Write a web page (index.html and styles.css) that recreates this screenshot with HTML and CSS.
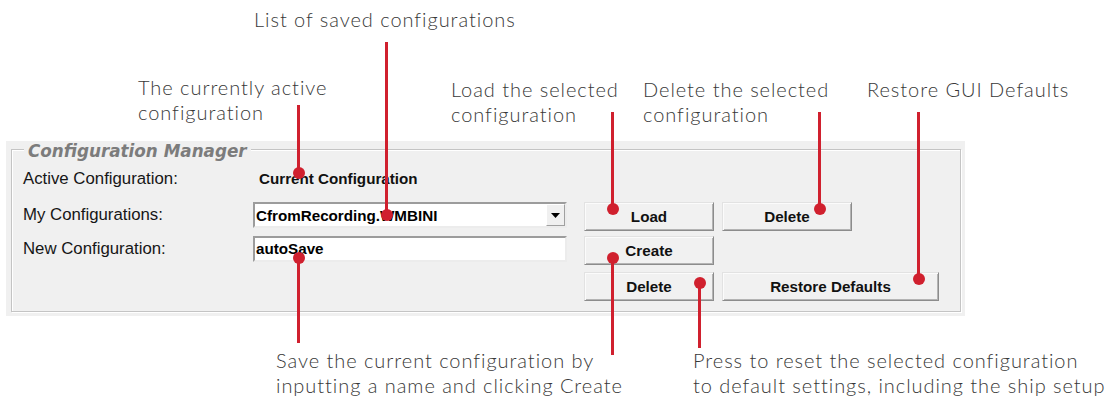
FILE: index.html
```html
<!DOCTYPE html>
<html>
<head>
<meta charset="utf-8">
<link rel="stylesheet" href="styles.css">
</head>
<body>
<div class="stage">
  <div class="panel">
    <div class="group">
      <div class="legend">Configuration Manager</div>
      <div class="form">
        <span class="lbl r1 c1">Active Configuration:</span>
        <span class="value r1 c2">Current Configuration</span>

        <span class="lbl r2 c1">My Configurations:</span>
        <div class="combo r2 c2">
          <span class="combo-text">CfromRecording.WMBINI</span>
          <span class="combo-btn"><svg width="9" height="5" viewBox="0 0 9 5"><path d="M0 0H9L4.5 5Z" fill="#000"/></svg></span>
        </div>
        <button class="btn r2 c3">Load</button>
        <button class="btn r2 c4">Delete</button>

        <span class="lbl r3 c1">New Configuration:</span>
        <div class="field r3 c2">autoSave</div>
        <button class="btn r3 c3">Create</button>

        <button class="btn r4 c3">Delete</button>
        <button class="btn wide r4 c4">Restore Defaults</button>
      </div>
    </div>
  </div>

  <div class="note n-list">List of saved configurations</div>
  <div class="note n-active">The currently active<br>configuration</div>
  <div class="note n-load">Load the selected<br>configuration</div>
  <div class="note n-delete">Delete the selected<br>configuration</div>
  <div class="note n-restore">Restore GUI Defaults</div>
  <div class="note n-save">Save the current configuration by<br>inputting a name and clicking Create</div>
  <div class="note n-press">Press to reset the selected configuration<br>to default settings, including the ship setup</div>

  <div class="callout dot-bottom l-active"></div>
  <div class="callout dot-bottom l-list"></div>
  <div class="callout dot-bottom l-load"></div>
  <div class="callout dot-bottom l-delete"></div>
  <div class="callout dot-bottom l-restore"></div>
  <div class="callout dot-top l-save"></div>
  <div class="callout dot-top l-create"></div>
  <div class="callout dot-top l-reset"></div>
</div>
</body>
</html>
```

FILE: styles.css
```css
html, body {
  margin: 0;
  padding: 0;
  background: #ffffff;
}

.stage {
  position: relative;
  width: 1108px;
  height: 399px;
  box-sizing: border-box;
  padding-top: 141px;
  padding-left: 6px;
  overflow: hidden;
}

.panel {
  width: 959px;
  height: 175px;
  box-sizing: border-box;
  background: #f0f0f0;
  padding: 8px 4px 0 5px;
}

.group {
  height: 163px;
  box-sizing: border-box;
  border: 1px solid #c4c4c4;
  box-shadow: inset 1px 1px 0 #ffffff, 1px 1px 0 #ffffff;
}

.legend {
  display: table;
  margin: -9px 0 0 12px;
  padding: 0 4px;
  height: 20px;
  line-height: 20px;
  background: #f0f0f0;
  font-family: "DejaVu Sans", Verdana, sans-serif;
  font-weight: bold;
  font-style: italic;
  font-size: 16.8px;
  color: #7c7c7c;
}

.form {
  display: grid;
  grid-template-columns: 230px 331px 138px 217px;
  grid-template-rows: 34px 34px 36px 29px;
  margin: 7px 0 0 11px;
  align-items: start;
  justify-items: start;
}

.r1 { grid-row: 1; }
.r2 { grid-row: 2; }
.r3 { grid-row: 3; }
.r4 { grid-row: 4; }
.c1 { grid-column: 1; }
.c2 { grid-column: 2; }
.c3 { grid-column: 3; }
.c4 { grid-column: 4; }

.lbl {
  font-family: "Liberation Sans", Arial, sans-serif;
  font-size: 16.8px;
  color: #161616;
  line-height: 26px;
  white-space: nowrap;
}

.lbl.r1 {
  line-height: 22px;
}

.value {
  margin-left: 6px;
  font-family: "Liberation Sans", Arial, sans-serif;
  font-weight: bold;
  font-size: 15.2px;
  line-height: 22px;
  color: #111111;
}

.combo,
.field {
  width: 314px;
  height: 26px;
  box-sizing: border-box;
  background: #ffffff;
  border: 2px solid;
  border-color: #9c9c9c #ececec #ececec #9c9c9c;
  font-family: "Liberation Sans", Arial, sans-serif;
  font-weight: bold;
  font-size: 15.2px;
  color: #000000;
}

.combo {
  display: flex;
  align-items: center;
  justify-content: space-between;
  padding-left: 1px;
}

.field {
  line-height: 22px;
  padding-left: 1px;
}

.combo-btn {
  width: 19px;
  height: 22px;
  box-sizing: border-box;
  background: #f0f0f0;
  border: 1px solid;
  border-color: #ffffff #a0a0a0 #a0a0a0 #ffffff;
  display: flex;
  align-items: center;
  justify-content: center;
}

.btn {
  width: 130px;
  height: 29px;
  box-sizing: border-box;
  margin: 0;
  padding: 0;
  background: #f1f1f1;
  border: 1px solid;
  border-color: #e2e2e2 #8c8c8c #8c8c8c #e2e2e2;
  box-shadow: inset 1px 1px 0 #fbfbfb, inset -1px -1px 0 #b4b4b4;
  font-family: "Liberation Sans", Arial, sans-serif;
  font-weight: bold;
  font-size: 15.2px;
  color: #111111;
  text-align: center;
}

.btn.wide {
  width: 217px;
}

.note {
  position: absolute;
  font-family: Lato, "Open Sans", sans-serif;
  font-weight: 300;
  font-size: 20px;
  letter-spacing: 0.95px;
  line-height: 25px;
  color: #383838;
  white-space: nowrap;
}

.n-list { left: 254px; top: 7px; }
.n-active { left: 138px; top: 75px; }
.n-load { left: 451px; top: 77px; }
.n-delete { left: 643px; top: 77px; }
.n-restore { left: 867px; top: 77px; }
.n-save { left: 276px; top: 348px; }
.n-press { left: 693px; top: 348px; }

.callout {
  position: absolute;
  width: 3px;
  background: #d0202e;
}

.callout::after {
  content: "";
  position: absolute;
  left: -4.5px;
  width: 12px;
  height: 12px;
  border-radius: 50%;
  background: #d0202e;
}

.dot-bottom::after { bottom: -6px; }
.dot-top::after { top: -6px; }

.l-active { left: 297px; top: 105px; height: 68px; }
.l-list { left: 385px; top: 42px; height: 173px; }
.l-load { left: 611px; top: 112px; height: 97px; }
.l-delete { left: 818px; top: 112px; height: 97px; }
.l-restore { left: 917px; top: 112px; height: 167px; }
.l-save { left: 297px; top: 258px; height: 85px; }
.l-create { left: 611px; top: 258px; height: 97px; }
.l-reset { left: 698px; top: 283px; height: 65px; }
```
